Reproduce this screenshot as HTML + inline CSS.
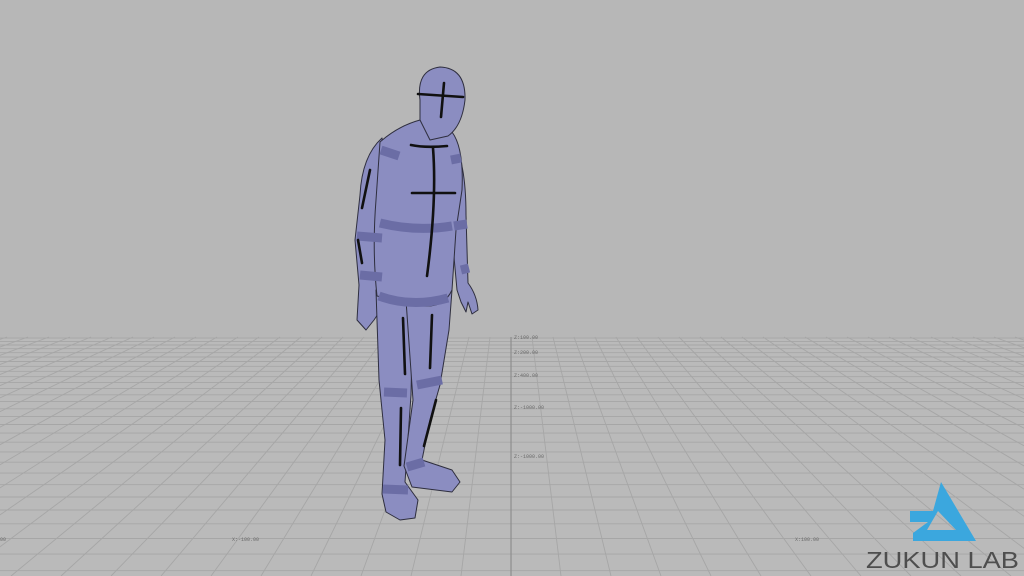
<!DOCTYPE html>
<html><head><meta charset="utf-8"><style>
html,body{margin:0;padding:0;background:#b5b5b5;}
svg{display:block}
</style></head><body>
<svg width="1024" height="576" viewBox="0 0 1024 576" xmlns="http://www.w3.org/2000/svg">
<rect width="1024" height="576" fill="#b7b7b7"/>
<rect y="337" width="1024" height="239" fill="#bababa"/>
<g stroke="#a6a6a6" stroke-width="0.9" fill="none">
<path d="M0 338H1024M0 341.4H1024M0 345H1024M0 348.7H1024M0 352.7H1024M0 357H1024M0 361.5H1024M0 366.3H1024M0 371.3H1024M0 376.7H1024M0 382.4H1024M0 388.4H1024M0 394.8H1024M0 401.6H1024M0 408.8H1024M0 416.4H1024M0 424.5H1024M0 433.1H1024M0 442.2H1024M0 451.9H1024M0 462.2H1024M0 473.1H1024M0 484.7H1024M0 497H1024M0 510H1024M0 523.8H1024M0 538.5H1024M0 554.1H1024M0 570.7H1024"/>
<path d="M532 337L561 576M553 337L611 576M574 337L661 576M595 337L711 576M616 337L761 576M637 337L811 576M658 337L861 576M679 337L911 576M700 337L961 576M721 337L1011 576M742 337L1061 576M763 337L1111 576M784 337L1161 576M805 337L1211 576M826 337L1261 576M847 337L1311 576M868 337L1361 576M889 337L1411 576M910 337L1461 576M931 337L1511 576M952 337L1561 576M973 337L1611 576M994 337L1661 576M1015 337L1711 576
M490 337L461 576M469 337L411 576M448 337L361 576M427 337L311 576M406 337L261 576M385 337L211 576M364 337L161 576M343 337L111 576M322 337L61 576M301 337L11 576M280 337L-39 576M259 337L-89 576M238 337L-139 576M217 337L-189 576M196 337L-239 576M175 337L-289 576M154 337L-339 576M133 337L-389 576M112 337L-439 576M91 337L-489 576M70 337L-539 576M49 337L-589 576M28 337L-639 576M7 337L-689 576"/>
</g>
<path d="M511 337V576" stroke="#8e8e8e" stroke-width="1.2"/>
<g font-family="Liberation Mono, monospace" font-size="5" fill="#6a6a6a">
<text x="514" y="339">Z:100.00</text>
<text x="514" y="354">Z:200.00</text>
<text x="514" y="377">Z:400.00</text>
<text x="514" y="409">Z:-1000.00</text>
<text x="514" y="458">Z:-1000.00</text>
<text x="232" y="541">X:-100.00</text>
<text x="795" y="541">X:100.00</text>
<text x="0" y="541">00</text>
</g>
<!-- figure -->
<g stroke="#2e2e3e" stroke-width="1" fill="#8b8dc1" stroke-linejoin="round">
<path d="M452 140Q466 160 466 215L468 283Q477 295 478 310L472 314L468 302L466 312L461 302L457 290L452 235Z"/>
<path d="M382 138Q362 156 360 195L355 240L359 285L357 320L366 330L374 320L382 308L386 298L382 240L390 200Z"/>
<path d="M376 290L413 300L411 395L405 482L418 500L415 518L400 520L386 512L382 494L385 440L379 380Z"/>
<path d="M406 300L452 290L449 330L440 385L430 420L422 460L452 470L460 482L452 492L412 487L404 466L413 400Z"/>
<path d="M380 142Q398 126 420 120L452 132Q464 148 462 190L456 230L452 290Q442 312 412 304L377 296Q372 250 376 200Z"/>
<path d="M420 100Q416 70 440 67Q466 68 465 100Q462 126 448 136L430 140L420 120Z"/>
</g>
<g stroke="#6b6da5" stroke-width="9" fill="none" stroke-linecap="butt">
<path d="M380 223Q416 232 452 226"/>
<path d="M357 236L382 238"/>
<path d="M454 226L467 224"/>
<path d="M360 275L382 277"/>
<path d="M461 270L469 268"/>
<path d="M379 296Q412 308 448 298"/>
<path d="M384 392L407 393"/>
<path d="M417 385L442 380"/>
<path d="M383 489L408 490"/>
<path d="M407 467L424 462"/>
<path d="M381 150L399 156"/>
<path d="M451 160L461 158"/>
</g>
<g stroke="#111" stroke-width="2.6" fill="none" stroke-linecap="round">
<path d="M418 94L463 97"/><path d="M444 83L441 117"/>
<path d="M411 145Q425 148 447 146"/><path d="M433 148Q437 200 427 276"/>
<path d="M412 193L455 193"/>
<path d="M370 170L362 208"/><path d="M358 240L362 263"/>
<path d="M403 318L405 374"/><path d="M432 315L430 368"/>
<path d="M401 408L400 465"/><path d="M436 400L424 446"/>
</g>
<!-- logo -->
<path fill-rule="evenodd" fill="#3ba7de" d="M941 482L976 541L913 541L913 533L928 522L910 522L910 511L933 511Z M938 511L956 530L927 530Z"/>
<text x="866" y="568" font-family="Liberation Sans, sans-serif" font-size="23" fill="#4e4e4e" textLength="153" lengthAdjust="spacingAndGlyphs">ZUKUN LAB</text>
</svg>
</body></html>
